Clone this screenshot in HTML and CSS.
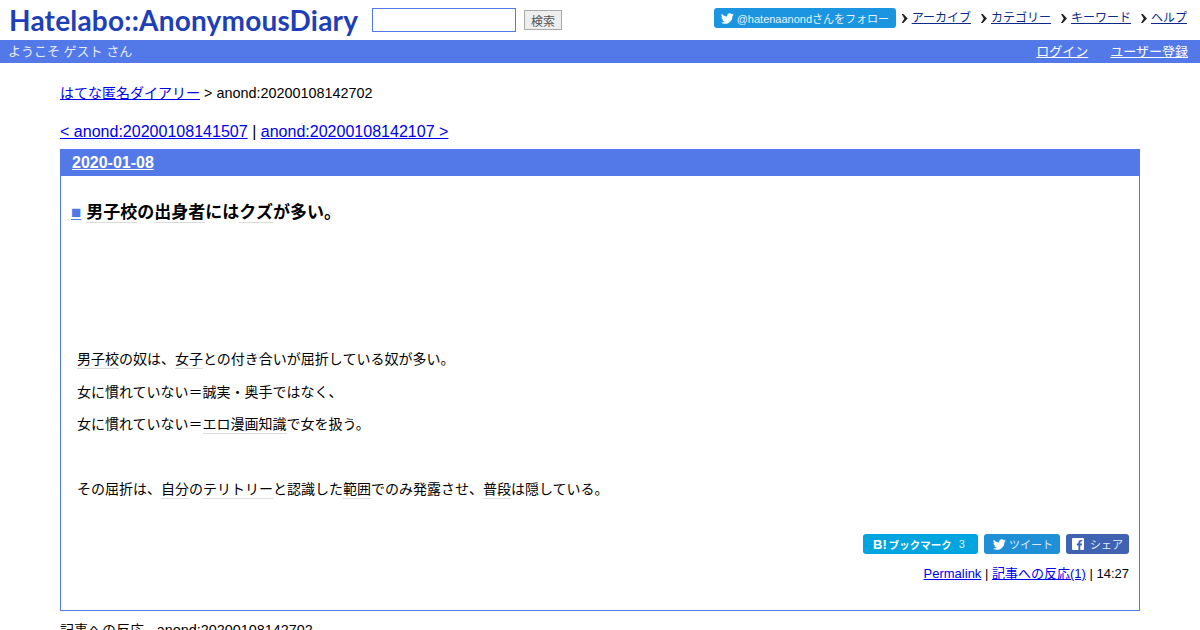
FILE: index.html
```html
<!DOCTYPE html>
<html lang="ja">
<head>
<meta charset="utf-8">
<title>anond:20200108142702</title>
<link rel="stylesheet" href="styles.css">
</head>
<body>
<header class="top">
  <div class="brand">
    <a class="logo" href="#">Hatelabo::AnonymousDiary</a>
    <form class="search">
      <input class="search-input" type="text">
      <button class="search-btn" type="button">検索</button>
    </form>
  </div>
  <nav class="top-nav">
    <a class="follow" href="#">
      <svg class="bird" viewBox="0 0 24 24"><path d="M23.6 4.6c-.9.4-1.8.6-2.8.8 1-.6 1.8-1.5 2.1-2.7-.9.6-2 1-3.1 1.2C18.900 2.900 17.600 2.300 16.300 2.300c-2.700 0-4.900 2.200-4.900 4.900 0 .4 0 .8.100 1.100C7.400 8.100 3.800 6.100 1.400 3.200c-.4.700-.7 1.600-.7 2.500 0 1.700.9 3.200 2.200 4.100-.8 0-1.600-.2-2.200-.6v.1c0 2.400 1.700 4.400 3.900 4.800-.4.100-.8.200-1.300.2-.3 0-.6 0-.9-.1.600 2 2.400 3.400 4.600 3.400-1.700 1.300-3.800 2.100-6.100 2.100-.4 0-.8 0-1.200-.1 2.200 1.400 4.800 2.200 7.500 2.200 9.100 0 14-7.500 14-14v-.6c1-.7 1.800-1.600 2.500-2.500z"/></svg>
      <span>@hatenaanondさんをフォロー</span>
    </a>
    <a class="nav-link" href="#">アーカイブ</a>
    <a class="nav-link" href="#">カテゴリー</a>
    <a class="nav-link" href="#">キーワード</a>
    <a class="nav-link" href="#">ヘルプ</a>
  </nav>
</header>
<div class="welcome">
  <span>ようこそ ゲスト さん</span>
  <div class="welcome-links"><a href="#">ログイン</a><a href="#">ユーザー登録</a></div>
</div>
<main class="main">
  <p class="crumb"><a href="#">はてな匿名ダイアリー</a> &gt; anond:20200108142702</p>
  <p class="pager"><a href="#">&lt; anond:20200108141507</a> | <a href="#">anond:20200108142107 &gt;</a></p>
  <section class="day">
    <h2 class="day-head"><a href="#">2020-01-08</a></h2>
    <div class="day-body">
      <h3 class="entry-title"><a class="sanchor" href="#">■</a><span class="kw">男子校</span>の<span class="kw">出身者</span>には<span class="kw">クズ</span>が多い。</h3>
      <div class="entry-text">
        <p><span class="kw">男子校</span>の奴は、<span class="kw">女子</span>との付き合いが屈折している奴が多い。</p>
        <p>女に慣れていない＝誠実・奥手ではなく、</p>
        <p>女に慣れていない＝<span class="kw">エロ漫画知識</span>で女を扱う。</p>
        <p class="blank">&nbsp;</p>
        <p>その屈折は、<span class="kw">自分</span>の<span class="kw">テリトリー</span>と認識した<span class="kw">範囲</span>でのみ発露させ、<span class="kw">普段</span>は隠している。</p>
      </div>
      <div class="share">
        <a class="share-btn hatena" href="#"><b>B!</b><b class="hb-label">ブックマーク</b><span class="hb-count">3</span></a>
        <a class="share-btn tweet" href="#"><svg class="bird" viewBox="0 0 24 24"><path d="M23.6 4.6c-.9.4-1.8.6-2.8.8 1-.6 1.8-1.5 2.1-2.7-.9.6-2 1-3.1 1.2C18.900 2.900 17.600 2.300 16.300 2.300c-2.700 0-4.900 2.200-4.900 4.900 0 .4 0 .8.100 1.100C7.400 8.100 3.800 6.100 1.400 3.200c-.4.700-.7 1.600-.7 2.500 0 1.700.9 3.200 2.200 4.100-.8 0-1.600-.2-2.200-.6v.1c0 2.400 1.700 4.400 3.900 4.800-.4.100-.8.200-1.300.2-.3 0-.6 0-.9-.1.600 2 2.400 3.400 4.600 3.400-1.700 1.300-3.800 2.100-6.100 2.100-.4 0-.8 0-1.200-.1 2.200 1.400 4.800 2.200 7.500 2.200 9.100 0 14-7.500 14-14v-.6c1-.7 1.800-1.600 2.500-2.500z"/></svg><span>ツイート</span></a>
        <a class="share-btn fb" href="#"><svg class="fb-icon" viewBox="0 0 12 12"><path d="M1 0h10a1 1 0 0 1 1 1v10a1 1 0 0 1-1 1H8.300V7.400h1.500l.2-1.800H8.300V4.500c0-.5.200-.9.900-.9h1V2c-.2 0-.8-.1-1.400-.1-1.400 0-2.400.9-2.400 2.400v1.300H4.800v1.800h1.600V12H1a1 1 0 0 1-1-1V1a1 1 0 0 1 1-1z"/></svg><span>シェア</span></a>
      </div>
      <p class="foot"><a href="#">Permalink</a> | <a href="#">記事への反応(1)</a> | 14:27</p>
    </div>
  </section>
  <p class="refs"><span class="refs-label">記事への反応</span> - anond:20200108142702</p>
</main>
</body>
</html>
```
FILE: styles.css
```css
html, body { margin: 0; padding: 0; }
body {
  font-family: "Liberation Sans", "Noto Sans CJK JP", sans-serif;
  font-size: 14.4px;
  color: #000;
  background: #fff;
}
a { color: #00e; }
p { margin: 0; }

.top {
  height: 40px;
  display: flex;
  justify-content: space-between;
  align-items: flex-start;
}
.brand { display: flex; align-items: flex-start; padding-left: 9px; }
.logo {
  width: 351px;
  height: 40px;
  line-height: 41px;
  font-family: Lato, sans-serif;
  font-weight: 700;
  font-size: 28px;
  letter-spacing: 0.2px;
  white-space: nowrap;
  color: #1f3fb8;
  text-decoration: none;
}
.search { display: flex; align-items: flex-start; gap: 8px; margin: 8px 0 0 12px; }
.search-input {
  box-sizing: border-box;
  width: 144px;
  height: 24px;
  border: 1px solid #5279e7;
  padding: 0;
  background: #fff;
}
.search-btn {
  box-sizing: border-box;
  width: 38px;
  height: 20px;
  margin-top: 2px;
  padding: 0;
  border: 1px solid #aaa;
  background: #eee;
  color: #555;
  font: 12px "Liberation Sans", "Noto Sans CJK JP", sans-serif;
}
.top-nav { display: flex; align-items: flex-start; padding: 8px 13px 0 0; }
.follow {
  box-sizing: border-box;
  width: 182px;
  height: 20px;
  display: flex;
  align-items: center;
  gap: 3px;
  padding-left: 7px;
  margin-right: 6px;
  background: #1b95e0;
  border-radius: 3px;
  color: #e4f2fb;
  font-size: 11px;
  text-decoration: none;
  white-space: nowrap;
}
.bird { width: 13px; height: 13px; fill: #fff; flex: none; }
.nav-link {
  position: relative;
  margin-left: 10px;
  margin-right: 10px;
  font-size: 12px;
  line-height: 20px;
  color: #0b2a8a;
}
.nav-link:last-child { margin-right: 0; }
.nav-link::before {
  content: "";
  position: absolute;
  left: -10px;
  top: 6px;
  width: 6px;
  height: 9px;
  clip-path: polygon(0 0, 30% 0, 100% 50%, 30% 100%, 0 100%, 45% 50%);
  background-color: #222;
}
.welcome {
  height: 23px;
  box-sizing: border-box;
  padding: 0 12px 2px 8px;
  display: flex;
  justify-content: space-between;
  align-items: center;
  background: #5279e7;
  color: #e6ecfb;
  font-size: 13px;
}
.welcome-links { display: flex; gap: 22px; }
.welcome-links a { color: #fff; }

.main { margin: 0 60px; }
.crumb { padding-top: 21px; line-height: 18px; }
.crumb a { font-size: 14px; }
.pager { margin-top: 20px; font-size: 16.04px; line-height: 18px; }
.day { margin-top: 9px; border: 1px solid #5279e7; }
.day-head {
  margin: 0;
  height: 26px;
  padding-left: 11px;
  background: #5279e7;
  font-size: 16px;
  line-height: 25px;
}
.day-head a { color: #fff; }
.day-body { height: 434px; padding: 0 10px 0 10px; }
.entry-title {
  margin: 0;
  padding-top: 27px;
  font-size: 17px;
  line-height: 20px;
}
.sanchor { color: #5279e7; font-size: 17px; margin-right: 5px; }
.kw { border-bottom: 1px solid #dcdcdc; }
.entry-text { padding: 126px 0 0 6px; font-size: 14px; }
.entry-text p { line-height: 20px; margin-bottom: 12.5px; }
.entry-text .kw { padding-bottom: 1px; }
.share { display: flex; justify-content: flex-end; gap: 6px; margin-top: 35px; }
.share-btn {
  height: 20px;
  box-sizing: border-box;
  display: flex;
  align-items: center;
  border-radius: 3px;
  color: #dcecf8;
  font-size: 11px;
  text-decoration: none;
}
.hatena { width: 115px; background: #00a4de; padding-left: 10px; color: #fff; }
.hatena b { font-size: 13px; font-weight: 700; }
.hatena .hb-label { margin-left: 2px; font-size: 10.5px; }
.hb-count { margin-left: 7px; color: #d8f0fa; }
.tweet { width: 76px; background: #1f8fd6; padding-left: 9px; gap: 3px; }
.fb { width: 63px; background: #3f63b0; padding-left: 6px; gap: 6px; }
.fb-icon { width: 12px; height: 12px; fill: #fff; }
.foot { margin-top: 11px; text-align: right; font-size: 13px; line-height: 18px; }
.refs { margin-top: 10px; line-height: 18px; }
.refs-label { font-size: 14px; }
```
